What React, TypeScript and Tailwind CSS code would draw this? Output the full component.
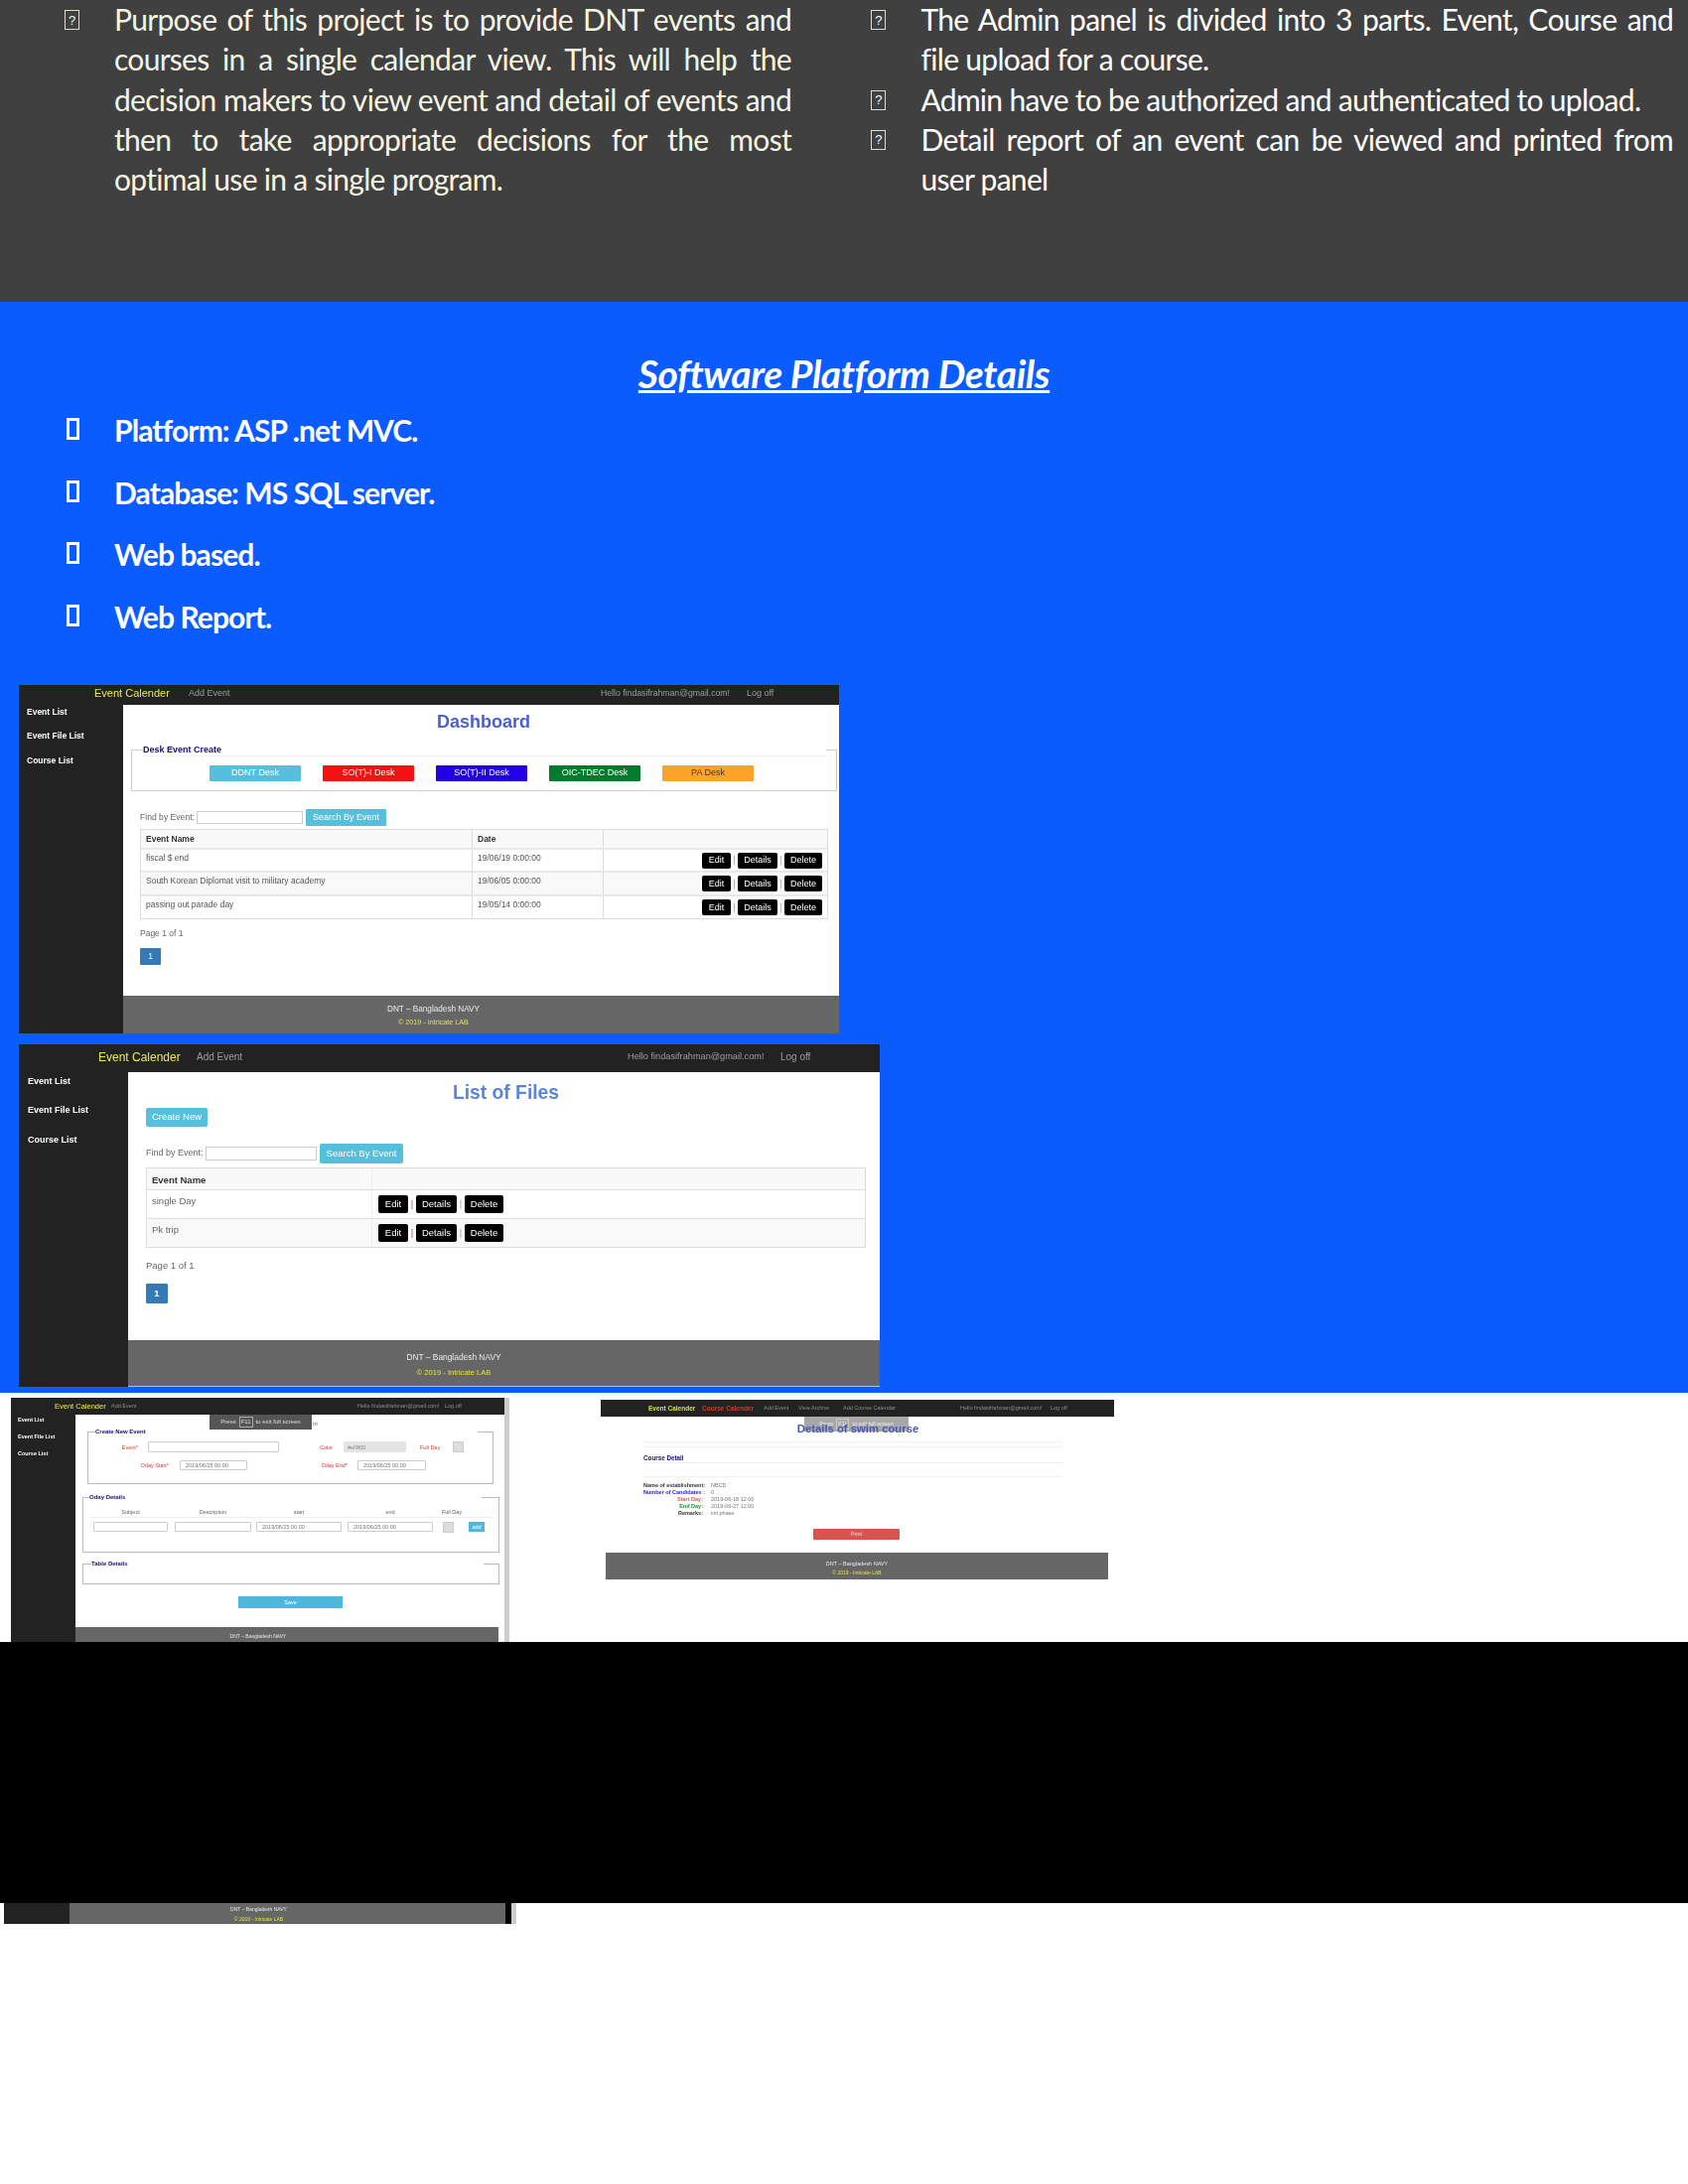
const arial = "font-['Liberation_Sans',Arial,sans-serif]";

function Tofu({ top }: { top: string }) {
  return (
    <span className={`${top} shrink-0 w-[15px] h-[20px] border border-[#ddddcc] flex items-center justify-center text-[13px] leading-none font-['Liberation_Sans',sans-serif]`}>?</span>
  );
}

function Bullet({ text }: { text: string }) {
  return (
    <li className="h-[62.7px] flex items-center">
      <span className="shrink-0 w-[13px] h-[22px] border-[3px] border-white mr-[35px] -mt-[3px]"></span>
      <span className="text-[30px] font-bold text-white tracking-[-0.9px]">{text}</span>
    </li>
  );
}

function Sidebar({ w, items }: { w: string; items: string }) {
  return (
    <aside className={`${w} ${items} shrink-0 bg-[#222222] text-white font-bold`}>
      <div>Event List</div>
      <div>Event File List</div>
      <div>Course List</div>
    </aside>
  );
}

function Act({ cls, label }: { cls: string; label: string }) {
  return <span className={`${cls} bg-black text-white rounded-[2px] flex items-center justify-center`}>{label}</span>;
}

function Sep() {
  return <span className="w-[7px] text-center text-[#999999] leading-none">|</span>;
}

function Actions1() {
  return (
    <div className="flex items-center justify-end pr-[5px] pt-[1px] text-[9px]">
      <Act cls="w-[29px] h-[16px]" label="Edit" />
      <Sep />
      <Act cls="w-[40px] h-[16px]" label="Details" />
      <Sep />
      <Act cls="w-[38px] h-[16px]" label="Delete" />
    </div>
  );
}

function Row1({ name, date, alt, h }: { name: string; date: string; alt?: boolean; h: string }) {
  return (
    <div className={`grid grid-cols-[334px_132px_1fr] ${h} border-t-2 border-[#e8e8e8] ${alt ? "bg-[#f9f9f9]" : "bg-white"}`}>
      <div className="pl-[5px] pt-[2px] border-r border-[#dddddd] text-[#555555]">{name}</div>
      <div className="pl-[5px] pt-[2px] border-r border-[#dddddd] text-[#555555]">{date}</div>
      <Actions1 />
    </div>
  );
}

function Screen1() {
  return (
    <div className={`ml-[19px] w-[826px] h-[351px] flex flex-col bg-white overflow-hidden blur-[0.25px] ${arial}`}>
      <header className="h-[20px] shrink-0 bg-[#222222] flex items-center pl-[76px] pb-[3px] text-[9px] text-[#9d9d9d]">
        <span className="text-[11px] text-[#e9e94e] w-[95px]">Event Calender</span>
        <span className="w-[415px]">Add Event</span>
        <span className="w-[147px] text-[8.7px] whitespace-nowrap">Hello findasifrahman@gmail.com!</span>
        <span>Log off</span>
      </header>
      <div className="flex-1 flex min-h-0">
        <Sidebar w="w-[105px]" items="pl-[8px] pt-[2px] text-[8.5px] [&>div]:h-[24.5px] [&>div]:leading-[11px]" />
        <main className="flex-1 flex flex-col min-w-0">
          <div className="flex-1 min-h-0 text-[8.5px]">
            <h2 className="pt-[7px] text-center text-[18px] leading-[20px] font-bold text-[#4a60cf] pl-[5px]">Dashboard</h2>
            <fieldset className="mt-[13px] ml-[8px] mr-[2px] border border-[#cccccc] pb-[9px]">
              <legend className="ml-[11px] w-[688px] border-b border-[#eeeeee] text-[9px] leading-[11px] font-bold text-[#1a0a80]">Desk Event Create</legend>
              <div className="mt-[9px] pl-[78px] flex gap-[22px] text-[9px] text-white">
                <span className="w-[92px] h-[16px] bg-[#55bfdc] rounded-[1px] flex items-center justify-center">DDNT Desk</span>
                <span className="w-[92px] h-[16px] bg-[#f21212] rounded-[1px] flex items-center justify-center">SO(T)-I Desk</span>
                <span className="w-[92px] h-[16px] bg-[#2200e6] rounded-[1px] flex items-center justify-center">SO(T)-II Desk</span>
                <span className="w-[92px] h-[16px] bg-[#037a2e] rounded-[1px] flex items-center justify-center">OIC-TDEC Desk</span>
                <span className="w-[92px] h-[16px] bg-[#fda32c] rounded-[1px] flex items-center justify-center text-[#4a3a20]">PA Desk</span>
              </div>
            </fieldset>
            <div className="mt-[18px] ml-[17px] flex items-center text-[#666666] text-[9px]">
              <span className="w-[57px] text-[8.6px] whitespace-nowrap">Find by Event:</span>
              <span className="w-[107px] h-[13px] border border-[#cccccc] bg-white"></span>
              <span className="ml-[3px] w-[81px] h-[17px] bg-[#55bfdc] text-white rounded-[1px] flex items-center justify-center">Search By Event</span>
            </div>
            <div className="mt-[3px] ml-[17px] w-[693px] border border-[#dddddd] border-t text-[8.5px]">
              <div className="grid grid-cols-[334px_132px_1fr] h-[18px] bg-[#f9f9f9] font-bold text-[#333333]">
                <div className="pl-[5px] pt-[3px] border-r border-[#dddddd]">Event Name</div>
                <div className="pl-[5px] pt-[3px] border-r border-[#dddddd]">Date</div>
                <div></div>
              </div>
              <Row1 h="h-[23px]" name="fiscal $ end" date="19/06/19 0:00:00" />
              <Row1 h="h-[24px]" alt name="South Korean Diplomat visit to military academy" date="19/06/05 0:00:00" />
              <Row1 h="h-[24px]" name="passing out parade day" date="19/05/14 0:00:00" />
            </div>
            <p className="mt-[9px] ml-[17px] text-[8.5px] leading-[10px] text-[#666666]">Page 1 of 1</p>
            <span className="mt-[10px] ml-[17px] w-[21px] h-[17px] bg-[#337ab7] text-white rounded-[1px] flex items-center justify-center">1</span>
          </div>
          <footer className="h-[38px] shrink-0 bg-[#666666] flex flex-col items-center pt-[8px] pr-[96px] text-[#e8e8e8]">
            <span className="text-[8.2px] leading-[11px]">DNT – Bangladesh NAVY</span>
            <span className="mt-[3px] text-[7.2px] leading-[10px] text-[#e2e24a]">© 2019 - Intricate LAB</span>
          </footer>
        </main>
      </div>
    </div>
  );
}

function Row2({ name, alt }: { name: string; alt?: boolean }) {
  return (
    <div className={`grid grid-cols-[227px_1fr] h-[29px] border-t border-[#dddddd] ${alt ? "bg-[#f9f9f9]" : "bg-white"}`}>
      <div className="pl-[5px] pt-[4px] border-r border-[#eeeeee] text-[#666666]">{name}</div>
      <div className="pl-[6px] pt-[5px] flex items-start text-[9.5px]">
        <Act cls="w-[30px] h-[18px]" label="Edit" />
        <span className="w-[8px] text-center text-[#aa5555] leading-[18px]">|</span>
        <Act cls="w-[41px] h-[18px]" label="Details" />
        <span className="w-[8px] text-center text-[#999999] leading-[18px]">|</span>
        <Act cls="w-[39px] h-[18px]" label="Delete" />
      </div>
    </div>
  );
}

function Screen2() {
  return (
    <div className={`mt-[11px] ml-[19px] w-[867px] h-[345px] flex flex-col bg-white overflow-hidden blur-[0.25px] ${arial}`}>
      <header className="h-[28px] shrink-0 bg-[#222222] flex items-center pl-[80px] pb-[2px] text-[10px] text-[#9d9d9d]">
        <span className="text-[12px] text-[#e9e94e] w-[99px]">Event Calender</span>
        <span className="w-[434px]">Add Event</span>
        <span className="w-[154px] text-[9.2px] whitespace-nowrap">Hello findasifrahman@gmail.com!</span>
        <span>Log off</span>
      </header>
      <div className="flex-1 flex min-h-0">
        <Sidebar w="w-[110px]" items="pl-[9px] pt-[3px] text-[9px] [&>div]:h-[29.5px] [&>div]:leading-[12px]" />
        <main className="flex-1 flex flex-col min-w-0 border-b border-[#a8c0ee]">
          <div className="flex-1 min-h-0 text-[9.5px]">
            <h2 className="pt-[10px] text-center text-[19.3px] leading-[22px] font-bold text-[#5d84d8] pl-[4px]">List of Files</h2>
            <span className="mt-[4px] ml-[18px] w-[62px] h-[19px] bg-[#55bfdc] text-white rounded-[2px] flex items-center justify-center">Create New</span>
            <div className="mt-[17px] ml-[18px] flex items-center text-[#666666]">
              <span className="w-[60px] text-[9px] whitespace-nowrap">Find by Event:</span>
              <span className="w-[112px] h-[14px] border border-[#cccccc] bg-white"></span>
              <span className="ml-[3px] w-[84px] h-[20px] bg-[#55bfdc] text-white rounded-[2px] flex items-center justify-center">Search By Event</span>
            </div>
            <div className="mt-[4px] ml-[18px] w-[725px] border border-[#dddddd]">
              <div className="grid grid-cols-[227px_1fr] h-[21px] bg-[#f9f9f9] font-bold text-[#333333]">
                <div className="pl-[5px] pt-[5px] border-r border-[#eeeeee]">Event Name</div>
                <div></div>
              </div>
              <Row2 name="single Day" />
              <Row2 alt name="Pk trip" />
            </div>
            <p className="mt-[12px] ml-[18px] leading-[12px] text-[#666666]">Page 1 of 1</p>
            <span className="mt-[12px] ml-[18px] w-[22px] h-[20px] bg-[#337ab7] text-white rounded-[1px] flex items-center justify-center font-bold">1</span>
          </div>
          <footer className="h-[46px] shrink-0 bg-[#666666] flex flex-col items-center pt-[11px] pr-[101px] text-[#e8e8e8]">
            <span className="text-[8.4px] leading-[12px]">DNT – Bangladesh NAVY</span>
            <span className="mt-[4px] text-[7.6px] leading-[12px] text-[#e2e24a]">© 2019 - Intricate LAB</span>
          </footer>
        </main>
      </div>
    </div>
  );
}

function Lbl({ cls, text }: { cls: string; text: string }) {
  return <span className={`${cls} text-[#d83a3a] text-right`}>{text}</span>;
}

function Box({ cls, text }: { cls: string; text?: string }) {
  return <span className={`${cls} border border-[#cccccc] bg-white rounded-[1px] pl-[5px] text-[#777777] flex items-center`}>{text}</span>;
}

function Screen3() {
  return (
    <div className={`relative shrink-0 w-[502px] h-[246px] flex overflow-hidden blur-[0.4px] ${arial}`}>
      <div className="w-[497px] h-full flex flex-col bg-white">
        <header className="h-[17px] shrink-0 bg-[#222222] flex items-center pl-[44px] text-[5.5px] text-[#8d8d8d]">
          <span className="text-[7.5px] text-[#e9e94e] w-[57px]">Event Calender</span>
          <span className="w-[248px]">Add Event</span>
          <span className="w-[88px]">Hello findasifrahman@gmail.com!</span>
          <span>Log off</span>
        </header>
        <div className="flex-1 flex min-h-0">
          <Sidebar w="w-[65px]" items="pl-[7px] pt-[0px] text-[5.5px] [&>div]:h-[17px] [&>div]:leading-[10px]" />
          <main className="flex-1 flex flex-col min-w-0 overflow-hidden">
            <div className="flex-1 min-h-0 text-[5.5px] leading-[8px]">
              <fieldset className="mt-[13px] ml-[12px] w-[409px] border border-[#bbbbbb] pb-[13px]">
                <legend className="ml-[7px] w-[385px] text-[6px] leading-[8px] font-bold text-[#1a0a80]">Create New Event</legend>
                <div className="mt-[6px] flex items-center h-[11px]">
                  <Lbl cls="w-[50px]" text="Event*" />
                  <Box cls="ml-[10px] w-[132px] h-[11px]" />
                  <Lbl cls="ml-[41px] w-[13px]" text="Color" />
                  <span className="ml-[11px] w-[63px] h-[11px] bg-[#e4e4e4] pl-[4px] text-[#888888] rounded-[1px] flex items-center">#ef9f00</span>
                  <Lbl cls="ml-[14px] w-[18px] whitespace-nowrap" text="Full Day" />
                  <span className="ml-[15px] w-[11px] h-[11px] bg-[#dddddd] border border-[#cccccc]"></span>
                </div>
                <div className="mt-[8px] flex items-center h-[10px]">
                  <Lbl cls="w-[81px]" text="Oday Start*" />
                  <Box cls="ml-[11px] w-[68px] h-[10px]" text="2019/06/25 00:00" />
                  <Lbl cls="ml-[68px] w-[33px]" text="Oday End*" />
                  <Box cls="ml-[10px] w-[69px] h-[10px]" text="2019/06/25 00:00" />
                </div>
              </fieldset>
              <fieldset className="mt-[9px] ml-[7px] w-[420px] border border-[#bbbbbb] pb-[20px]">
                <legend className="ml-[6px] w-[395px] text-[6px] leading-[8px] font-bold text-[#1a0a80]">Oday Details</legend>
                <div className="mt-[7px] ml-[6px] mr-[6px] border-b border-[#eeeeee] h-[10px] flex text-[#666666] text-center">
                  <span className="ml-[4px] w-[75px]">Subject</span>
                  <span className="ml-[7px] w-[77px]">Description</span>
                  <span className="ml-[5px] w-[86px]">start</span>
                  <span className="ml-[6px] w-[86px]">end</span>
                  <span className="ml-[8px] w-[22px] whitespace-nowrap">Full Day</span>
                </div>
                <div className="mt-[4px] ml-[10px] flex items-center h-[10px]">
                  <Box cls="w-[75px] h-[10px]" />
                  <Box cls="ml-[7px] w-[77px] h-[10px]" />
                  <Box cls="ml-[5px] w-[86px] h-[10px]" text="2019/06/25 00:00" />
                  <Box cls="ml-[6px] w-[86px] h-[10px]" text="2019/06/25 00:00" />
                  <span className="ml-[10px] w-[11px] h-[11px] bg-[#dddddd] border border-[#cccccc]"></span>
                  <span className="ml-[15px] w-[16px] h-[10px] bg-[#4db8dc] text-white flex items-center justify-center">add</span>
                </div>
              </fieldset>
              <fieldset className="mt-[7px] ml-[7px] w-[420px] border border-[#bbbbbb] pb-[16px]">
                <legend className="ml-[8px] w-[395px] text-[6px] leading-[8px] font-bold text-[#1a0a80]">Table Details</legend>
              </fieldset>
              <span className="mt-[12px] ml-[164px] w-[105px] h-[12px] bg-[#4db8dc] text-white flex items-center justify-center">Save</span>
            </div>
            <footer className="h-[15px] shrink-0 w-[426px] bg-[#666666] flex justify-center pt-[5px] pr-[58px] text-[5px] leading-[8px] text-[#e8e8e8]">DNT – Bangladesh NAVY</footer>
          </main>
        </div>
      </div>
      <div className="w-[5px] bg-[#cccccc]"></div>
      <div className="absolute left-[200px] top-[17px] w-[103px] h-[15px] bg-[#555555] flex items-center justify-center gap-[3px] text-[6px] text-[#dddddd]">
        <span>Press</span><span className="border border-[#aaaaaa] px-[1px]">F11</span><span>to exit full screen</span>
      </div>
      <span className="absolute left-[304px] top-[22px] text-[6px] leading-[8px] text-[#d83a3a]">nt</span>
    </div>
  );
}

function Detail({ label, value, cls }: { label: string; value: string; cls: string }) {
  return (
    <div className="flex h-[7px] items-center">
      <span className={`w-[60px] text-right font-bold whitespace-nowrap ${cls}`}>{label}</span>
      <span className="ml-[8px] text-[#777777]">{value}</span>
    </div>
  );
}

function Screen4() {
  return (
    <div className={`relative ml-[92px] mt-[2px] w-[517px] h-[181px] flex flex-col bg-white overflow-hidden blur-[0.4px] ${arial}`}>
      <div className="absolute left-[205px] top-[17px] w-[105px] h-[15px] bg-[#a8a8a8] flex items-center justify-center gap-[3px] text-[5.5px] text-[#eeeeee]">
        <span>Press</span><span className="border border-[#cccccc] px-[1px]">F11</span><span>to exit full screen</span>
      </div>
      <header className="h-[17px] shrink-0 bg-[#222222] flex items-center pl-[48px] text-[5.5px] text-[#8d8d8d]">
        <span className="text-[6.5px] font-bold text-[#dede4a] w-[54px]">Event Calender</span>
        <span className="text-[6.5px] font-bold text-[#d8372a] w-[62px]">Course Calender</span>
        <span className="w-[35px]">Add Event</span>
        <span className="w-[45px]">View Archive</span>
        <span className="w-[118px]">Add Course Calendar</span>
        <span className="w-[91px]">Hello findasifrahman@gmail.com!</span>
        <span>Log off</span>
      </header>
      <h2 className="relative mt-[6px] pl-[1px] text-center text-[11.3px] leading-[12px] font-bold text-[#4a58b8]">Details of swim course</h2>
      <div className="ml-[43px] mr-[52px] mt-[7px] h-[6px] border-y border-[#f0f0f0]"></div>
      <div className="ml-[43px] mr-[52px] mt-[7px] h-[9px] border-b border-[#eeeeee] text-[6.3px] leading-[7px] font-bold text-[#1a0a80]">Course Detail</div>
      <div className="ml-[43px] mr-[52px] mt-[13px] h-0 border-t border-[#f2f2f2]"></div>
      <div className="ml-[43px] mt-[5px] text-[5.5px] leading-[7px]">
        <Detail label="Name of establishment:" value="NBCD" cls="text-[#333333]" />
        <Detail label="Number of Candidates :" value="0" cls="text-[#2a1ad0]" />
        <Detail label="Start Day:" value="2019-06-18 12:00" cls="text-[#e0604a]" />
        <Detail label="End Day:" value="2019-06-27 12:00" cls="text-[#1a8a3a]" />
        <Detail label="Remarks:" value="init phase" cls="text-[#333333]" />
      </div>
      <span className="mt-[12px] ml-[214px] w-[87px] h-[12px] bg-[#d9534f] text-[5.5px] text-[#f5dddd] rounded-[1px] flex items-center justify-center">Print</span>
      <footer className="mt-[13px] mx-[5px] h-[27px] w-[506px] shrink-0 bg-[#666666] flex flex-col items-center pt-[7px] text-[5.5px] leading-[8px] text-[#e8e8e8]">
        <span>DNT – Bangladesh NAVY</span>
        <span className="mt-[1px] text-[5px] text-[#e2e24a]">© 2019 - Intricate LAB</span>
      </footer>
    </div>
  );
}

export default function App() {
  return (
    <div className="w-[1700px] h-[2200px] bg-white font-['Lato','Open_Sans',sans-serif] overflow-hidden">
      <section className="h-[304px] bg-[#404040] flex pl-[65px]">
        <div className="w-[732px] flex text-[#f5f5e4]">
          <Tofu top="mt-[10px]" />
          <p className="-mt-[1px] ml-[35px] w-[682px] text-justify text-[30px] leading-[40.3px] tracking-[-0.7px]">
            Purpose of this project is to provide DNT events and courses in a single calendar view. This will help the decision makers to view event and detail of events and then to take appropriate decisions for the most optimal use in a single program.
          </p>
        </div>
        <ul className="-mt-[1px] ml-[80px] w-[808px] text-white text-[30px] leading-[40.3px] tracking-[-0.7px]">
          <li className="flex">
            <Tofu top="mt-[11px]" />
            <p className="ml-[35.5px] w-[757.5px] text-justify">The Admin panel is divided into 3 parts. Event, Course and file upload for a course.</p>
          </li>
          <li className="flex">
            <Tofu top="mt-[11px]" />
            <p className="ml-[35.5px] w-[757.5px]">Admin have to be authorized and authenticated to upload.</p>
          </li>
          <li className="flex">
            <Tofu top="mt-[11px]" />
            <p className="ml-[35.5px] w-[757.5px] text-justify">Detail report of an event can be viewed and printed from user panel</p>
          </li>
        </ul>
      </section>

      <section className="h-[1099px] bg-[#0b5cff] overflow-hidden">
        <h1 className="pt-[50px] text-center text-[39px] leading-[44px] font-bold italic underline text-white tracking-[-0.4px]">Software Platform Details</h1>
        <ul className="mt-[4px] pl-[67px]">
          <Bullet text="Platform: ASP .net MVC." />
          <Bullet text="Database: MS SQL server." />
          <Bullet text="Web based." />
          <Bullet text="Web Report." />
        </ul>
        <div className="mt-[37.2px]">
          <Screen1 />
          <Screen2 />
        </div>
      </section>

      <section className="h-[251px] bg-white pl-[11px] pt-[5px] flex items-start overflow-hidden">
        <Screen3 />
        <Screen4 />
      </section>

      <section className="h-[263px] bg-black"></section>

      <section className={`h-[21px] ml-[4px] w-[516px] flex ${arial}`}>
        <div className="w-[66px] bg-[#222222]"></div>
        <div className="w-[439px] bg-[#666666] flex flex-col items-center pt-[2px] pr-[58px] text-[5px] leading-[8px] text-[#e8e8e8] blur-[0.3px]">
          <span>DNT – Bangladesh NAVY</span>
          <span className="mt-[1.5px] text-[#e2e24a]">© 2019 - Intricate LAB</span>
        </div>
        <div className="w-[6px] bg-black"></div>
        <div className="w-[5px] bg-[#cccccc]"></div>
      </section>
    </div>
  );
}
